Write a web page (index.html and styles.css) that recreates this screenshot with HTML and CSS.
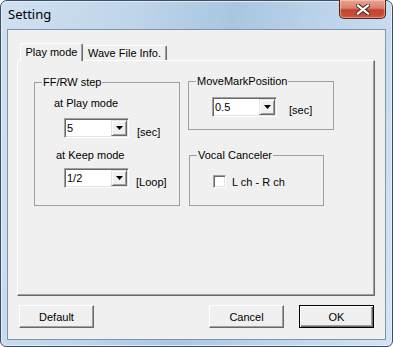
FILE: index.html
```html
<!DOCTYPE html>
<html>
    <head>
        <meta charset="utf-8">
        <title>Setting</title>
        <link rel="stylesheet" href="styles.css">
    </head>
    <body>
        <div class="window">
            <div class="titlebar">
                <span class="title">Setting</span>
                <div class="close_btn">
                    <svg width="14" height="11" viewBox="0 0 14 11">
                        <path d="M2 1.5 L12 9.5 M12 1.5 L2 9.5" stroke="#4a2a26" stroke-width="4.2" stroke-linecap="square"/>
                        <path d="M2 1.5 L12 9.5 M12 1.5 L2 9.5" stroke="#ffffff" stroke-width="2.2" stroke-linecap="square"/>
                    </svg>
                </div>
            </div>

            <div class="client">
                <div class="tabs">
                    <div class="tab tab_active">Play mode</div>
                    <div class="tab tab_wave">Wave File Info.</div>
                </div>

                <div class="tab_panel">
                    <div class="col_left">
                        <fieldset class="group group_step">
                            <legend>FF/RW step</legend>
                            <div class="group_body">
                                <div class="field_label label_play">at Play mode</div>
                                <div class="field_row row_play">
                                    <div class="combo">
                                        <span class="combo_value">5</span>
                                        <span class="combo_arrow"><svg width="7" height="4"><polygon points="0,0 7,0 3.5,4" fill="#000"/></svg></span>
                                    </div>
                                    <span class="unit unit_sec">[sec]</span>
                                </div>
                                <div class="field_label label_keep">at Keep mode</div>
                                <div class="field_row row_keep">
                                    <div class="combo">
                                        <span class="combo_value">1/2</span>
                                        <span class="combo_arrow"><svg width="7" height="4"><polygon points="0,0 7,0 3.5,4" fill="#000"/></svg></span>
                                    </div>
                                    <span class="unit unit_loop">[Loop]</span>
                                </div>
                            </div>
                        </fieldset>
                    </div>

                    <div class="col_right">
                        <fieldset class="group group_move">
                            <legend>MoveMarkPosition</legend>
                            <div class="group_body">
                                <div class="field_row row_move">
                                    <div class="combo">
                                        <span class="combo_value">0.5</span>
                                        <span class="combo_arrow"><svg width="7" height="4"><polygon points="0,0 7,0 3.5,4" fill="#000"/></svg></span>
                                    </div>
                                    <span class="unit unit_move">[sec]</span>
                                </div>
                            </div>
                        </fieldset>

                        <fieldset class="group group_vocal">
                            <legend>Vocal Canceler</legend>
                            <div class="group_body">
                                <label class="check_row">
                                    <span class="checkbox"></span>
                                    <span class="check_text">L ch - R ch</span>
                                </label>
                            </div>
                        </fieldset>
                    </div>
                </div>

                <div class="button_row">
                    <button class="btn">Default</button>
                    <span class="spacer"></span>
                    <button class="btn">Cancel</button>
                    <button class="btn btn_default">OK</button>
                </div>
            </div>
        </div>
    </body>
</html>
```

FILE: styles.css
```css
body {
    margin: 0;
    padding: 0;
    background: #ffffff;
    font-family: "Liberation Sans", Arial, sans-serif;
    font-size: 11px;
    color: #000000;
}

div.window {
    width: 393px;
    height: 347px;
    box-sizing: border-box;

    border: 1px solid #3a4f66;
    border-radius: 7px 7px 6px 6px;
    padding: 0 6px 6px 6px;

    background: linear-gradient(100deg, #d0e0f1 0%, #bfd5ea 30%, #a9c6e1 52%, #bcd3ea 72%, #d4e4f3 100%);
    box-shadow: inset 0 0 0 1px #e4eef8;
}

/* title bar */

div.titlebar {
    height: 28px;
    display: flex;
    justify-content: space-between;
    align-items: flex-start;
}

span.title {
    margin-top: 4px;
    margin-left: 1px;
    font-family: "Noto Sans", sans-serif;
    font-size: 13px;
    line-height: 18px;
    color: #000000;
}

div.close_btn {
    width: 47px;
    height: 19px;
    margin-top: -1px;
    box-sizing: border-box;

    border: 1px solid #5a2119;
    border-top: none;
    border-radius: 0 0 5px 5px;

    background: linear-gradient(to bottom, #e8a493 0%, #d7806d 45%, #c4432f 55%, #c8533c 100%);
    box-shadow: inset 0 0 1px 1px rgba(255, 220, 210, 0.5);

    display: flex;
    justify-content: center;
    align-items: center;
}

/* client area */

div.client {
    height: 311px;
    box-sizing: border-box;

    border: 1px solid #7f93aa;
    background: #f0f0f0;

    padding-top: 13px;
}

div.tabs {
    height: 17px;
    margin-left: 12px;

    display: flex;
    align-items: flex-end;
}

div.tab {
    box-sizing: border-box;
    border-top: 1px solid #ffffff;
    border-left: 1px solid #ffffff;
    border-right: 1px solid #696969;
    box-shadow: inset -1px 0 0 #a0a0a0;
    border-radius: 2px 2px 0 0;

    background: #f0f0f0;
    text-align: center;
    white-space: nowrap;
}

div.tab_active {
    width: 63px;
    height: 18px;
    margin-bottom: -1px;
    padding-top: 2px;
    line-height: 13px;

    position: relative;
    z-index: 1;
}

div.tab_wave {
    width: 84px;
    height: 15px;
    padding-top: 1px;
    line-height: 13px;
    border-left: none;
}

div.tab_panel {
    width: 358px;
    height: 236px;
    box-sizing: border-box;
    margin-left: 9px;

    border: 1px solid;
    border-color: #ffffff #696969 #696969 #ffffff;
    box-shadow: inset -1px -1px 0 #a0a0a0;

    display: flex;
    gap: 8px;
    padding-left: 16px;
}

/* group boxes */

fieldset.group {
    box-sizing: border-box;
    margin: 0;
    padding: 0;
    border: 1px solid #a0a0a0;
    min-width: 0;
}

fieldset.group legend {
    margin-left: 7px;
    padding: 0 1px;
    line-height: 13px;
}

fieldset.group_step {
    width: 146px;
    height: 130px;
    margin-top: 15px;
}

fieldset.group_move {
    width: 146px;
    height: 55px;
    margin-top: 14px;
}

fieldset.group_vocal {
    width: 135px;
    height: 57px;
    margin-top: 19px;
    margin-left: 1px;
}

div.field_label {
    line-height: 13px;
}

div.label_play {
    margin-top: 8px;
    margin-left: 19px;
}

div.label_keep {
    margin-top: 10px;
    margin-left: 21px;
}

div.field_row {
    display: flex;
    align-items: flex-start;
}

div.row_play {
    margin-top: 8px;
    margin-left: 29px;
    gap: 8px;
}

div.row_keep {
    margin-top: 6px;
    margin-left: 29px;
    gap: 7px;
}

div.row_move {
    margin-top: 9px;
    margin-left: 23px;
    gap: 12px;
}

span.unit {
    line-height: 13px;
}

span.unit_sec,
span.unit_loop {
    margin-top: 8px;
}

span.unit_move {
    margin-top: 7px;
}

/* combo box */

div.combo {
    width: 65px;
    height: 20px;
    box-sizing: border-box;

    border: 1px solid;
    border-color: #a0a0a0 #ffffff #ffffff #a0a0a0;
    box-shadow: inset 1px 1px 0 #696969, inset -1px -1px 0 #e3e3e3;
    padding: 1px;

    background: #ffffff;
    display: flex;
}

span.combo_value {
    flex: 1;
    padding-left: 1px;
    line-height: 16px;
}

span.combo_arrow {
    width: 16px;
    height: 16px;
    box-sizing: border-box;

    border: 1px solid;
    border-color: #e3e3e3 #696969 #696969 #e3e3e3;
    box-shadow: inset 1px 1px 0 #ffffff, inset -1px -1px 0 #a0a0a0;
    background: #f0f0f0;

    display: flex;
    justify-content: center;
    align-items: center;
}

span.combo_arrow svg {
    display: block;
}

/* check box */

label.check_row {
    display: flex;
    align-items: flex-start;
    gap: 6px;
    margin-top: 13px;
    margin-left: 23px;
}

span.checkbox {
    width: 13px;
    height: 13px;
    box-sizing: border-box;

    border: 1px solid;
    border-color: #a0a0a0 #ffffff #ffffff #a0a0a0;
    box-shadow: inset 1px 1px 0 #696969, inset -1px -1px 0 #e3e3e3;
    background: #ffffff;
}

span.check_text {
    margin-top: 1px;
    line-height: 13px;
}

/* buttons */

div.button_row {
    display: flex;
    gap: 15px;
    margin-top: 9px;
    padding: 0 11px;
}

span.spacer {
    flex: 1;
}

button.btn {
    width: 75px;
    height: 23px;
    box-sizing: border-box;
    margin: 0;
    padding: 0;

    border: 1px solid;
    border-color: #ffffff #696969 #696969 #ffffff;
    box-shadow: inset -1px -1px 0 #a0a0a0;
    border-radius: 0;

    background: #f0f0f0;
    font-family: "Liberation Sans", Arial, sans-serif;
    font-size: 11px;
    color: #000000;
}

button.btn_default {
    border: 1px solid #000000;
    box-shadow: inset 1px 1px 0 #ffffff, inset -1px -1px 0 #696969, inset -2px -2px 0 #a0a0a0;
}
```
